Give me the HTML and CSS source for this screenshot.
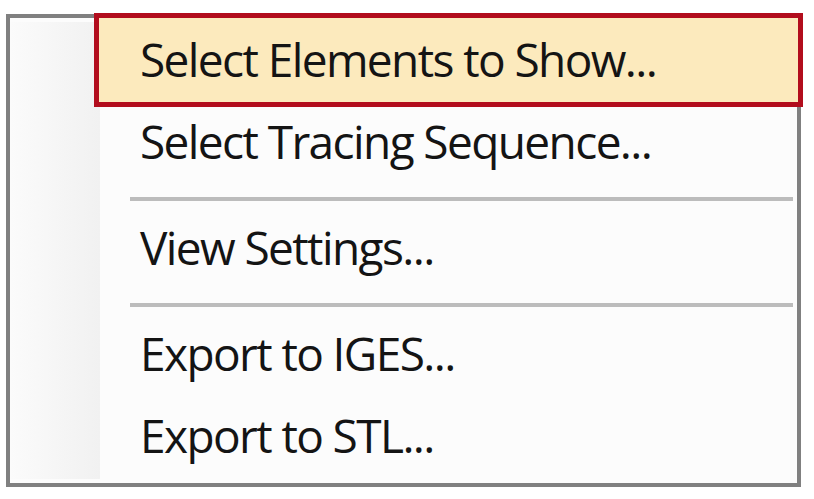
FILE: index.html
```html
<!DOCTYPE html>
<html lang="en">
<head>
  <meta charset="UTF-8">
  <title>Context Menu</title>
  <link rel="stylesheet" href="styles.css">
</head>
<body>
  <div class="menu">
    <ul class="menu-list">
      <li class="item active">Select Elements to Show...</li>
      <li class="item">Select Tracing Sequence...</li>
      <li class="sep"></li>
      <li class="item">View Settings...</li>
      <li class="sep"></li>
      <li class="item">Export to IGES...</li>
      <li class="item">Export to STL...</li>
    </ul>
  </div>
</body>
</html>
```

FILE: styles.css
```css
body {
  margin: 0;
  background-color: #ffffff;
  font-family: "Open Sans", "Noto Sans", sans-serif;
}

.menu {
  box-sizing: border-box;
  width: 795px;
  height: 473px;
  margin: 14px 0 0 6px;
  padding: 4px 0;
  border: 4px solid #808080;
  background-color: #fcfcfc;
}

.menu-list {
  list-style: none;
  margin: 0;
  padding: 0;
  height: 100%;
  background: linear-gradient(to right, #fbfbfb 0, #f1f1f1 90px, #fcfcfc 90px);
}

.item {
  position: relative;
  z-index: 0;
  height: 82px;
  box-sizing: border-box;
  padding: 0 0 8px 130px;
  font-size: 46px;
  line-height: 74px;
  letter-spacing: -1.6px;
  color: #141414;
  white-space: nowrap;
}

.item.active::before {
  content: "";
  position: absolute;
  z-index: -1;
  left: 84px;
  right: -6px;
  top: -9px;
  bottom: -3px;
  border: 5px solid #b20d1d;
  background-color: #fceabd;
}

.sep {
  height: 4px;
  margin: 11px 4px 9px 120px;
  background-color: #bcbcbc;
}
```
